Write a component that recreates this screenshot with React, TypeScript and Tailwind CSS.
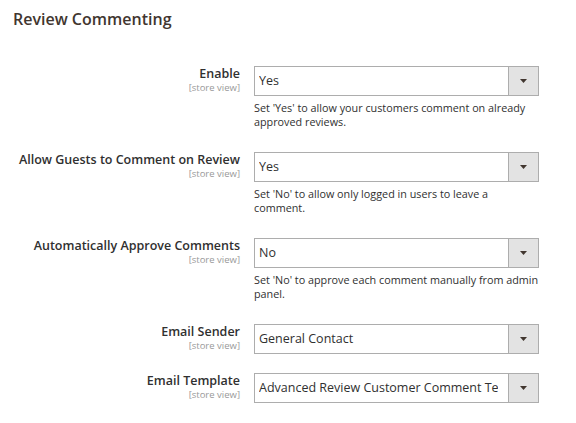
import React from 'react';

type Row = {
  label: string;
  value: string;
  note?: string;
};

const rows: Row[] = [
  { label: 'Enable', value: 'Yes', note: "Set 'Yes' to allow your customers comment on already approved reviews." },
  { label: 'Allow Guests to Comment on Review', value: 'Yes', note: "Set 'No' to allow only logged in users to leave a comment." },
  { label: 'Automatically Approve Comments', value: 'No', note: "Set 'No' to approve each comment manually from admin panel." },
  { label: 'Email Sender', value: 'General Contact' },
  { label: 'Email Template', value: 'Advanced Review Customer Comment Template' },
];

function FakeSelect({ value }: { value: string }) {
  return (
    <div className="flex h-[30px] w-[285px] border border-[#adadad] bg-white">
      <div className="flex-1 min-w-0 pl-[4px] pr-[10px]">
        <div className="overflow-hidden whitespace-nowrap text-[12.5px] leading-[27px] text-[#303030]">
          {value}
        </div>
      </div>
      <div className="flex w-[30px] items-center justify-center border-l border-[#adadad] bg-[#e3e3e3]">
        <svg width="7" height="4" viewBox="0 0 7 4">
          <path d="M0 0 L7 0 L3.5 4 Z" fill="#41362f" />
        </svg>
      </div>
    </div>
  );
}

export default function App() {
  return (
    <div className="h-[423px] w-[576px] bg-white font-['Open_Sans',sans-serif] text-[#303030]">
      <h2 className="pl-[13px] pt-[8px] text-[16px] font-semibold leading-[22px] text-[#41362f]">
        Review Commenting
      </h2>

      <div className="mt-[36px]">
        {rows.map((row) => (
          <div key={row.label} className={`flex ${row.note ? 'mb-[23px]' : 'mb-[19px]'}`}>
            <div className="w-[240px] text-right">
              <div className="text-[12.5px] font-semibold leading-[16px] text-[#303030]">{row.label}</div>
              <div className="text-[9.5px] leading-[11px] text-[#999999]">[store view]</div>
            </div>
            <div className="ml-[14px]">
              <FakeSelect value={row.value} />
              {row.note && (
                <p className="mt-[5px] w-[285px] text-[10.8px] leading-[14px] text-[#303030]">{row.note}</p>
              )}
            </div>
          </div>
        ))}
      </div>
    </div>
  );
}
